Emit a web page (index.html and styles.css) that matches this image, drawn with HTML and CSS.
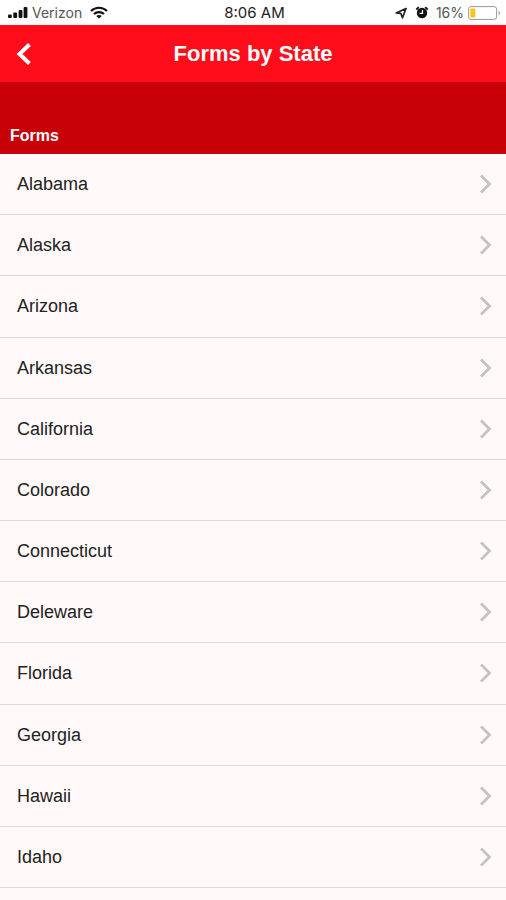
FILE: index.html
```html
<!DOCTYPE html>
<html lang="en">
<head>
<meta charset="utf-8">
<meta name="viewport" content="width=device-width, initial-scale=1">
<title>Forms by State</title>
<link rel="stylesheet" href="styles.css">
</head>
<body>
<svg class="defs" width="0" height="0" aria-hidden="true">
  <symbol id="chevron" viewBox="0 0 14 20"><path d="M2 1.5 10.5 10 2 18.5" fill="none" stroke="currentColor" stroke-width="2.8"/></symbol>
</svg>
<div class="status">
  <div class="status-side">
    <svg width="20" height="12" viewBox="0 0 20 12" fill="#111" aria-hidden="true">
      <rect x="0" y="7.5" width="3.8" height="3.5" rx="1"/><rect x="5.3" y="5.5" width="3.8" height="5.5" rx="1"/><rect x="10.600" y="3" width="3.800" height="8" rx="1"/><rect x="15.600" y="0" width="3.800" height="11" rx="1"/>
    </svg>
    <span class="carrier">Verizon</span>
    <svg class="wifi" width="18" height="13" viewBox="0 0 18 13" fill="none" stroke="#111" stroke-width="2.1" aria-hidden="true">
      <path d="M1 5.1C5.5.6 12.500.6 17 5.100M4 8.100c2.800-2.700 7.200-2.700 10 0"/><path d="M9 12.600 6.200 9.900c1.600-1.300 4-1.300 5.600 0z" fill="#111" stroke="none"/>
    </svg>
  </div>
  <span class="time">8:06 AM</span>
  <div class="status-side status-right">
    <svg width="12" height="12" viewBox="0 0 12 12" aria-hidden="true"><path d="M11 1.500 1.200 6 5.800 6.300 7.500 10.800z" fill="none" stroke="#222" stroke-width="1.700" stroke-linejoin="round"/></svg>
    <svg class="alarm" width="14" height="13" viewBox="0 0 14 13" aria-hidden="true"><circle cx="7" cy="7" r="5.200" fill="#111"/><path d="M1.300 3.500 3.800 1.200M12.700 3.500l-2.500-2.300" stroke="#111" stroke-width="1.800"/><path d="M7.500 3.900v3.500H4.600" fill="none" stroke="#fff" stroke-width="1.200"/></svg>
    <span class="percent">16%</span>
    <svg width="33" height="14" viewBox="0 0 33 14" aria-hidden="true"><rect x=".6" y=".6" width="28" height="12.800" rx="2.500" fill="#fff" stroke="#999"/><rect x="2.300" y="2.500" width="5" height="9" rx="1" fill="#fdc31c"/><path d="M30.500 4.800c2 .6 2 3.800 0 4.400z" fill="#aaa"/></svg>
  </div>
</div>
<header class="bar">
  <button class="back" type="button" aria-label="Back"><svg width="16" height="24" viewBox="0 0 16 24" aria-hidden="true"><path d="M13.500 2.500 3.500 12l10 9.500" fill="none" stroke="#fff" stroke-width="4"/></svg></button>
  <h1>Forms by State</h1>
</header>
<main>
  <h2>Forms</h2>
  <ul>
    <li><a href="#alabama">Alabama<svg class="chevron" aria-hidden="true"><use href="#chevron"/></svg></a></li>
    <li><a href="#alaska">Alaska<svg class="chevron" aria-hidden="true"><use href="#chevron"/></svg></a></li>
    <li><a href="#arizona">Arizona<svg class="chevron" aria-hidden="true"><use href="#chevron"/></svg></a></li>
    <li><a href="#arkansas">Arkansas<svg class="chevron" aria-hidden="true"><use href="#chevron"/></svg></a></li>
    <li><a href="#california">California<svg class="chevron" aria-hidden="true"><use href="#chevron"/></svg></a></li>
    <li><a href="#colorado">Colorado<svg class="chevron" aria-hidden="true"><use href="#chevron"/></svg></a></li>
    <li><a href="#connecticut">Connecticut<svg class="chevron" aria-hidden="true"><use href="#chevron"/></svg></a></li>
    <li><a href="#deleware">Deleware<svg class="chevron" aria-hidden="true"><use href="#chevron"/></svg></a></li>
    <li><a href="#florida">Florida<svg class="chevron" aria-hidden="true"><use href="#chevron"/></svg></a></li>
    <li><a href="#georgia">Georgia<svg class="chevron" aria-hidden="true"><use href="#chevron"/></svg></a></li>
    <li><a href="#hawaii">Hawaii<svg class="chevron" aria-hidden="true"><use href="#chevron"/></svg></a></li>
    <li><a href="#idaho">Idaho<svg class="chevron" aria-hidden="true"><use href="#chevron"/></svg></a></li>
  </ul>
</main>
</body>
</html>
```
FILE: styles.css
```css
* {
  box-sizing: border-box;
}

body {
  display: flex;
  flex-direction: column;
  min-height: 100vh;
  margin: 0;
  background: #fff9f9;
  color: #222;
  font-family: "Liberation Sans", Arial, sans-serif;
}

.defs {
  position: absolute;
}

.status {
  display: grid;
  grid-template-columns: 1fr auto 1fr;
  align-items: center;
  height: 25px;
  padding: 0 5px 0 8px;
  background: #fff;
  font-family: Inter, sans-serif;
  font-size: 14px;
}

.status-side {
  display: flex;
  align-items: center;
}

.status-right {
  justify-content: flex-end;
}

.carrier {
  margin: 0 8px 0 4px;
  color: #555;
}

.time {
  font-size: 15px;
}

.alarm {
  margin: 0 7px 0 8px;
}

.percent {
  margin-right: 4px;
  color: #555;
}

.bar {
  display: grid;
  grid-template-columns: 48px 1fr 48px;
  align-items: center;
  height: 57px;
  background: #ff0d1b;
  color: #fff;
}

.back {
  display: flex;
  align-items: center;
  height: 48px;
  padding: 0 0 0 16px;
  border: 0;
  background: none;
}

h1 {
  margin: 0;
  font-size: 22px;
  line-height: 28px;
  text-align: center;
}

main {
  display: flex;
  flex: 1;
  flex-direction: column;
}

h2 {
  margin: 0;
  padding: 44px 10px 8px;
  background: #c80007;
  color: #fff;
  font-size: 16px;
  line-height: 20px;
}

ul {
  display: flex;
  flex: 1;
  flex-direction: column;
  margin: 0;
  padding: 0 0 12px;
  list-style: none;
}

li {
  display: flex;
  flex: 1 0 auto;
  min-height: 60px;
  border-bottom: 1px solid #dcdada;
}

a {
  display: flex;
  flex: 1;
  align-items: center;
  justify-content: space-between;
  padding: 0 13px 0 17px;
  color: inherit;
  font-size: 18px;
  line-height: 24px;
  text-decoration: none;
}

.chevron {
  width: 14px;
  height: 20px;
  color: #c4c2c2;
}
```
